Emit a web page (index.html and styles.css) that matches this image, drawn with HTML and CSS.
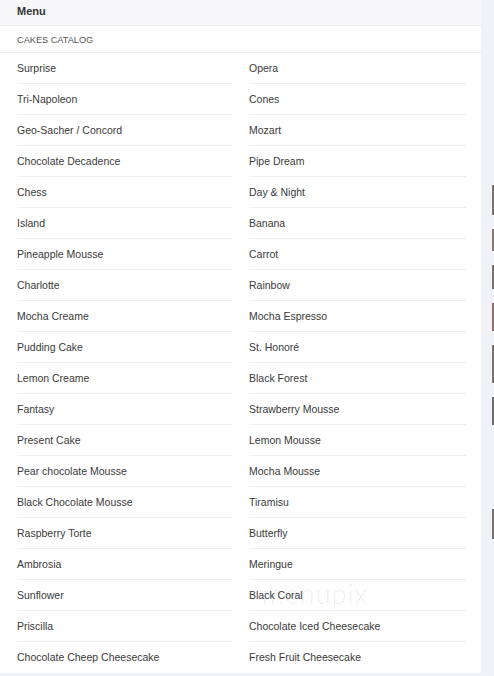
FILE: index.html
```html
<!DOCTYPE html>
<html>
<head>
<meta charset="utf-8">
<link rel="stylesheet" href="styles.css">
</head>
<body>
<div class="page">
  <div class="card">
    <div class="menu-head">Menu</div>
    <div class="section-title">CAKES CATALOG</div>
    <div class="grid">
      <div class="item">Surprise</div><div class="item">Opera</div>
      <div class="item">Tri-Napoleon</div><div class="item">Cones</div>
      <div class="item">Geo-Sacher / Concord</div><div class="item">Mozart</div>
      <div class="item">Chocolate Decadence</div><div class="item">Pipe Dream</div>
      <div class="item">Chess</div><div class="item">Day &amp; Night</div>
      <div class="item">Island</div><div class="item">Banana</div>
      <div class="item">Pineapple Mousse</div><div class="item">Carrot</div>
      <div class="item">Charlotte</div><div class="item">Rainbow</div>
      <div class="item">Mocha Creame</div><div class="item">Mocha Espresso</div>
      <div class="item">Pudding Cake</div><div class="item">St. Honoré</div>
      <div class="item">Lemon Creame</div><div class="item">Black Forest</div>
      <div class="item">Fantasy</div><div class="item">Strawberry Mousse</div>
      <div class="item">Present Cake</div><div class="item">Lemon Mousse</div>
      <div class="item">Pear chocolate Mousse</div><div class="item">Mocha Mousse</div>
      <div class="item">Black Chocolate Mousse</div><div class="item">Tiramisu</div>
      <div class="item">Raspberry Torte</div><div class="item">Butterfly</div>
      <div class="item">Ambrosia</div><div class="item">Meringue</div>
      <div class="item">Sunflower</div><div class="item">Black Coral</div>
      <div class="item">Priscilla</div><div class="item">Chocolate Iced Cheesecake</div>
      <div class="item last">Chocolate Cheep Cheesecake</div><div class="item last">Fresh Fruit Cheesecake</div>
    </div>
    <div class="watermark">menupix</div>
  </div>
  <div class="side">
    <div class="thumb t1"></div>
    <div class="thumb t2"></div>
    <div class="thumb t3"></div>
    <div class="thumb t4"></div>
    <div class="thumb t5"></div>
    <div class="thumb t6"></div>
    <div class="thumb t7"></div>
  </div>
</div>
</body>
</html>
```

FILE: styles.css
```css
html, body {
  margin: 0;
  padding: 0;
}
body {
  background: #f1f2f7;
  font-family: "Liberation Sans", Arial, sans-serif;
  color: #333;
  width: 494px;
  height: 676px;
  overflow: hidden;
}
.page {
  display: flex;
  height: 676px;
}
.card {
  position: relative;
  width: 481px;
  height: 673px;
  background: #fff;
  flex: none;
}
.menu-head {
  height: 25px;
  line-height: 23px;
  background: #f7f7fa;
  border-bottom: 1px solid #eeeff3;
  padding-left: 17px;
  font-size: 11px;
  font-weight: bold;
  color: #333;
}
.section-title {
  height: 26px;
  line-height: 28px;
  border-bottom: 1px solid #ececf0;
  padding-left: 17px;
  font-size: 9.2px;
  color: #555;
}
.grid {
  display: grid;
  grid-template-columns: 216px 217px;
  column-gap: 16px;
  padding-left: 17px;
}
.item {
  height: 30px;
  line-height: 30px;
  border-bottom: 1px solid #efeff2;
  font-size: 10.5px;
  color: #3a3a3a;
  white-space: nowrap;
}
.item.last {
  border-bottom: none;
}
.watermark {
  position: absolute;
  left: 262px;
  top: 577px;
  font-family: Lato, "Open Sans", sans-serif;
  font-weight: 300;
  font-size: 27px;
  letter-spacing: 1px;
  color: rgba(0, 0, 0, 0.09);
  pointer-events: none;
}
.side {
  flex: 1;
  position: relative;
  display: flex;
  flex-direction: column;
  padding-top: 185px;
  padding-left: 11px;
  gap: 14px;
}
.thumb {
  width: 2px;
  background: #5a514d;
  opacity: 0.8;
}
.t1 { height: 30px; }
.t2 { height: 22px; background: #6a5a50; }
.t3 { height: 24px; }
.t4 { height: 28px; background: #7a4a46; }
.t5 { height: 38px; }
.t6 { height: 28px; background: #4e4a4a; }
.t7 { height: 30px; margin-top: 70px; }
```
